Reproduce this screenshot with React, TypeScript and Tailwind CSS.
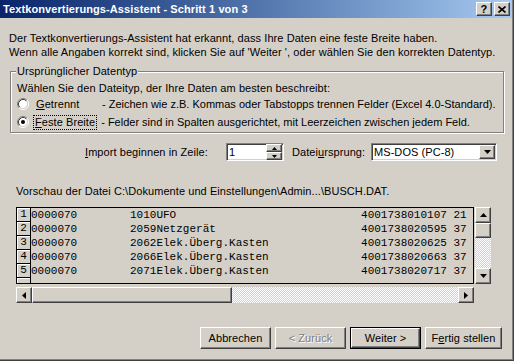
import React from "react";

const raised =
  "border border-t-white border-l-white border-r-[#404040] border-b-[#404040] shadow-[inset_-1px_-1px_#808080,inset_1px_1px_#d4d0c8] bg-[#d4d0c8]";
const sunken =
  "border border-t-[#808080] border-l-[#808080] border-r-white border-b-white shadow-[inset_1px_1px_#404040,inset_-1px_-1px_#d4d0c8]";
const checker =
  "bg-[image:repeating-conic-gradient(#ffffff_0_25%,#d4d0c8_0_50%)] bg-[length:2px_2px]";

type Dir = "up" | "down" | "left" | "right";

function Arrow({ dir, small }: { dir: Dir; small?: boolean }) {
  const s = small ? 5 : 7;
  const h = small ? 3 : 4;
  const pts: Record<Dir, string> = {
    up: `0,${h} ${s},${h} ${s / 2},0`,
    down: `0,0 ${s},0 ${s / 2},${h}`,
    left: `${h},0 ${h},${s} 0,${s / 2}`,
    right: `0,0 0,${s} ${h},${s / 2}`,
  };
  const vert = dir === "up" || dir === "down";
  return (
    <svg width={vert ? s : h} height={vert ? h : s}>
      <polygon points={pts[dir]} fill="#000" />
    </svg>
  );
}

function Radio({ checked }: { checked?: boolean }) {
  return (
    <svg width="12" height="12" className="shrink-0">
      <circle cx="6" cy="6" r="4.5" fill="#fff" />
      <path d="M2.11 9.89 A5.5 5.5 0 0 1 9.89 2.11" stroke="#808080" fill="none" />
      <path d="M9.89 2.11 A5.5 5.5 0 0 1 2.11 9.89" stroke="#fff" fill="none" />
      <path d="M2.82 9.18 A4.5 4.5 0 0 1 9.18 2.82" stroke="#404040" fill="none" />
      <path d="M9.18 2.82 A4.5 4.5 0 0 1 2.82 9.18" stroke="#d4d0c8" fill="none" />
      {checked && <circle cx="6" cy="6" r="2" fill="#000" />}
    </svg>
  );
}

const rows = [
  ["0000070", "1010UFO", "4001738010107", "21"],
  ["0000070", "2059Netzgerät", "4001738020595", "37"],
  ["0000070", "2062Elek.Überg.Kasten", "4001738020625", "37"],
  ["0000070", "2066Elek.Überg.Kasten", "4001738020663", "37"],
  ["0000070", "2071Elek.Überg.Kasten", "4001738020717", "37"],
  ["", "", "", ""],
];

export default function App() {
  return (
    <div className="h-[361px] w-[514px] overflow-hidden bg-[#d4d0c8] font-['Liberation_Sans',Arial,sans-serif] text-[11px] tracking-[0.07px] text-black">
      <div className="h-full border-r border-b border-[#404040]">
        <div className="flex h-full flex-col border-r border-b border-[#808080]">
          {/* title bar */}
          <div className="flex h-[18px] shrink-0 items-center justify-between bg-linear-to-r from-[#0a246a] to-[#a6caf0] pl-[3px] pr-[2px]">
            <span className="font-bold tracking-[0.1px] text-white">
              Textkonvertierungs-Assistent - Schritt 1 von 3
            </span>
            <div className="flex gap-[2px]">
              <div className={`${raised} flex h-[14px] w-[16px] items-center justify-center text-[11px] leading-none font-bold`}>
                ?
              </div>
              <div className={`${raised} flex h-[14px] w-[16px] items-center justify-center`}>
                <svg width="8" height="7">
                  <path d="M0.5 0.5 L7.5 6.5 M7.5 0.5 L0.5 6.5" stroke="#000" strokeWidth="1.6" />
                </svg>
              </div>
            </div>
          </div>

          <p className="mt-[13px] ml-[9px] leading-[14px]">
            Der Textkonvertierungs-Assistent hat erkannt, dass Ihre Daten eine feste Breite haben.
            <br />
            Wenn alle Angaben korrekt sind, klicken Sie auf 'Weiter ', oder wählen Sie den korrekten Datentyp.
          </p>

          <fieldset className="mt-[6px] ml-[10px] w-[494px] border border-[#808080] pb-[1px] pl-[6px] shadow-[inset_1px_1px_#ffffff,1px_1px_#ffffff]">
            <legend className="-ml-px bg-[#d4d0c8] px-[1px] leading-[13px]">Ursprünglicher Datentyp</legend>
            <div className="mt-[3px] leading-[14px]">
              Wählen Sie den Dateityp, der Ihre Daten am besten beschreibt:
            </div>
            <div className="flex h-[18px] items-center">
              <Radio />
              <span className="ml-[6px] w-[67px] px-[1px]">
                <u>G</u>etrennt
              </span>
              <span className="tracking-normal">
                - Zeichen wie z.B. Kommas oder Tabstopps trennen Felder (Excel 4.0-Standard).
              </span>
            </div>
            <div className="flex h-[18px] items-center">
              <Radio checked />
              <span className="ml-[4px] mr-[4px] border border-dotted border-black px-[1px] leading-[13px]">
                <u>F</u>este Breite
              </span>
              <span className="tracking-normal">
                - Felder sind in Spalten ausgerichtet, mit Leerzeichen zwischen jedem Feld.
              </span>
            </div>
          </fieldset>

          <div className="mt-[10px] flex h-[18px] items-center">
            <span className="ml-[85px] w-[141px]">
              <u>I</u>mport beginnen in Zeile:
            </span>
            <div className={`${sunken} flex h-[18px] w-[58px] items-center bg-white`}>
              <span className="flex-1 pl-[2px]">1</span>
              <div className="mr-[1px] flex flex-col">
                <div className={`${raised} flex h-[8px] w-[16px] items-center justify-center`}>
                  <Arrow dir="up" small />
                </div>
                <div className={`${raised} flex h-[8px] w-[16px] items-center justify-center`}>
                  <Arrow dir="down" small />
                </div>
              </div>
            </div>
            <span className="ml-[8px] w-[79px]">
              Datei<u>u</u>rsprung:
            </span>
            <div className={`${sunken} flex h-[18px] w-[126px] items-center bg-white`}>
              <span className="flex-1 pl-[2px]">MS-DOS (PC-8)</span>
              <div className={`${raised} mr-[1px] flex h-[14px] w-[16px] items-center justify-center`}>
                <Arrow dir="down" />
              </div>
            </div>
          </div>

          <p className="mt-[23px] ml-[16px] leading-[14px]">
            Vorschau der Datei C:\Dokumente und Einstellungen\Admin...\BUSCH.DAT.
          </p>

          <div className="mt-[9px] ml-[16px] flex gap-[1px]">
            <div className="h-[77px] w-[458px] overflow-hidden border border-black bg-[#d4d0c8] font-['Liberation_Mono','Courier_New',monospace] text-[11px] tracking-normal">
              {rows.map((r, i) => (
                <div key={i} className="flex h-[14px] items-center">
                  <div className="flex h-[14px] w-[14px] shrink-0 items-center justify-center border-r border-b border-black shadow-[inset_1px_1px_#ffffff]">
                    {r[0] ? i + 1 : ""}
                  </div>
                  <span className="whitespace-pre">
                    {r[0] ? r[0].padEnd(15) + r[1].padEnd(35) + r[2] + " " + r[3] : ""}
                  </span>
                </div>
              ))}
            </div>
            <div className="flex h-[77px] w-[16px] flex-col">
              <div className={`${raised} flex h-[16px] items-center justify-center`}>
                <Arrow dir="up" />
              </div>
              <div className={`${raised} h-[15px]`} />
              <div className={`${checker} flex-1`} />
              <div className={`${raised} flex h-[16px] items-center justify-center`}>
                <Arrow dir="down" />
              </div>
            </div>
          </div>

          <div className="mt-[3px] ml-[16px] flex h-[16px] w-[458px]">
            <div className={`${raised} flex w-[16px] items-center justify-center`}>
              <Arrow dir="left" />
            </div>
            <div className={`${raised} w-[200px]`} />
            <div className={`${checker} flex-1`} />
            <div className={`${raised} flex w-[16px] items-center justify-center`}>
              <Arrow dir="right" />
            </div>
          </div>

          <div className="mt-[24px] ml-[200px] flex gap-[4px]">
            <button type="button" className={`${raised} h-[22px] w-[71px]`}>
              Abbrechen
            </button>
            <button type="button" className={`${raised} h-[22px] w-[71px] text-[#808080] [text-shadow:1px_1px_0_#ffffff]`}>
              &lt; Zurück
            </button>
            <div className="h-[22px] w-[71px] border border-black">
              <button type="button" className={`${raised} h-full w-full`}>
                Weiter &gt;
              </button>
            </div>
            <button type="button" className={`${raised} h-[22px] w-[77px]`}>
              F<u>e</u>rtig stellen
            </button>
          </div>
        </div>
      </div>
    </div>
  );
}
